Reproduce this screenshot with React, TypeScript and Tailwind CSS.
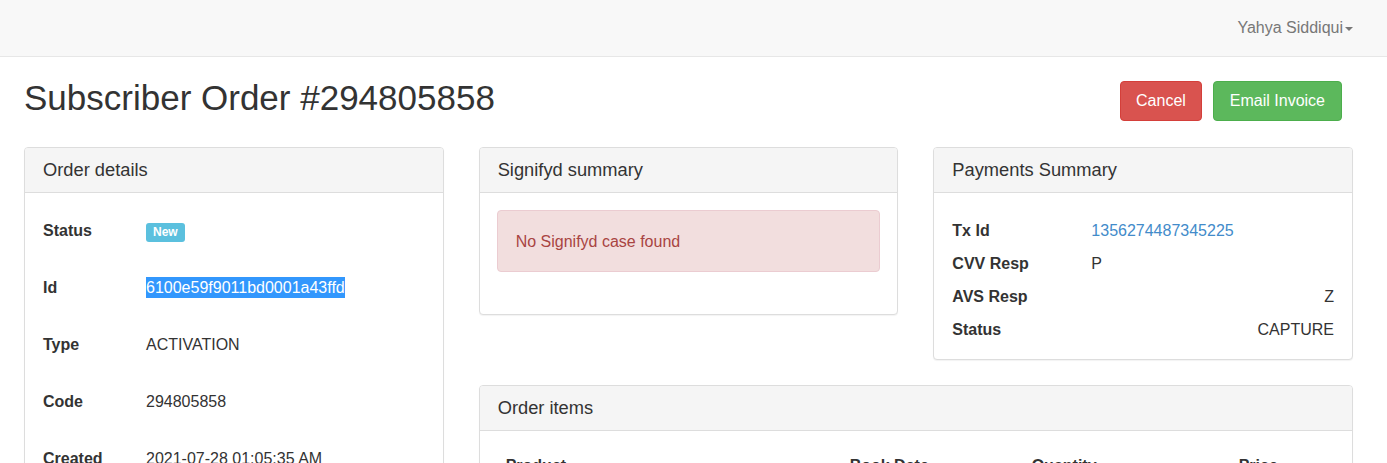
import React from "react";

const font = { fontFamily: '"Liberation Sans", Arial, sans-serif' };

function Panel({ title, children, className = "" }: { title: string; children: React.ReactNode; className?: string }) {
  return (
    <div className={`rounded-[4px] border border-[#ddd] bg-white shadow-[0_1px_1px_rgba(0,0,0,0.05)] ${className}`}>
      <div className="flex h-[45px] items-center rounded-t-[3px] border-b border-[#ddd] bg-[#f5f5f5] px-[18px] text-[18.3px] text-[#333]">
        {title}
      </div>
      {children}
    </div>
  );
}

function DetailRow({ label, children }: { label: string; children: React.ReactNode }) {
  return (
    <div className="flex h-[57px] items-center">
      <div className="w-[103px] shrink-0 font-bold text-[#333]">{label}</div>
      <div className="text-[#333]">{children}</div>
    </div>
  );
}

function PayRow({ label, children, right = false }: { label: string; children: React.ReactNode; right?: boolean }) {
  return (
    <div className="flex h-[33px] items-center">
      <div className="w-[139px] shrink-0 font-bold text-[#333]">{label}</div>
      <div className={`flex-1 text-[#333] ${right ? "text-right" : ""}`}>{children}</div>
    </div>
  );
}

export default function App() {
  return (
    <div className="min-h-screen bg-white text-[16px] text-[#333]" style={font}>
      {/* Navbar */}
      <div className="flex h-[57px] items-center justify-end border-b border-[#e7e7e7] bg-[#f8f8f8] pr-[34px]">
        <span className="flex items-center text-[16px] text-[#777]">
          Yahya Siddiqui
          <span className="ml-[2px] mt-[2px] h-0 w-0 border-x-[4px] border-t-[4px] border-x-transparent border-t-[#777]" />
        </span>
      </div>

      <div className="pl-[24px] pr-[34px] pb-[40px]">
        {/* Title row */}
        <div className="flex items-start justify-between pt-[21px]">
          <h1 className="text-[35px] leading-[40px] text-[#333]">Subscriber Order #294805858</h1>
          <div className="mt-[3px] mr-[11px] flex gap-[11px]">
            <button className="h-[40px] rounded-[4px] border border-[#d43f3a] bg-[#d9534f] px-[15px] text-[16px] text-white">
              Cancel
            </button>
            <button className="h-[40px] rounded-[4px] border border-[#4cae4c] bg-[#5cb85c] px-[16px] text-[16px] text-white">
              Email Invoice
            </button>
          </div>
        </div>

        <div className="mt-[26px] grid grid-cols-3 gap-x-[35px]">
          {/* Order details */}
          <Panel title="Order details">
            <div className="px-[18px] pt-[9px] pb-[20px]">
              <DetailRow label="Status">
                <span className="inline-block rounded-[3px] bg-[#5bc0de] px-[7px] pt-[2px] pb-[3px] text-[12px] leading-[14px] font-bold text-white">
                  New
                </span>
              </DetailRow>
              <DetailRow label="Id">
                <span className="inline-block h-[21px] bg-[#3297fd] leading-[21px] text-white">6100e59f9011bd0001a43ffd</span>
              </DetailRow>
              <DetailRow label="Type">ACTIVATION</DetailRow>
              <DetailRow label="Code">294805858</DetailRow>
              <DetailRow label="Created">2021-07-28 01:05:35 AM</DetailRow>
            </div>
          </Panel>

          <div className="col-span-2">
            <div className="grid grid-cols-2 items-start gap-x-[35px]">
              <Panel title="Signifyd summary">
                <div className="px-[17px] pt-[17px] pb-[19px]">
                  <div className="mb-[23px] rounded-[4px] border border-[#ebccd1] bg-[#f2dede] px-[18px] pt-[19px] pb-[18px] leading-[23px] text-[#a94442]">
                    No Signifyd case found
                  </div>
                </div>
              </Panel>

              <Panel title="Payments Summary">
                <div className="px-[18px] pt-[21px] pb-[13px]">
                  <PayRow label="Tx Id">
                    <span className="text-[#428bca]">1356274487345225</span>
                  </PayRow>
                  <PayRow label="CVV Resp">P</PayRow>
                  <PayRow label="AVS Resp" right>
                    Z
                  </PayRow>
                  <PayRow label="Status" right>
                    CAPTURE
                  </PayRow>
                </div>
              </Panel>
            </div>

            <Panel title="Order items" className="mt-[25px]">
              <div className="p-[17px]">
                <table className="w-full border-collapse text-left">
                  <thead>
                    <tr className="font-bold">
                      <th className="w-[344px] px-[9px] pt-[6px] pb-[9px]">Product</th>
                      <th className="w-[182px] px-[9px] pt-[6px] pb-[9px]">Book Date</th>
                      <th className="w-[207px] px-[9px] pt-[6px] pb-[9px]">Quantity</th>
                      <th className="px-[9px] pt-[6px] pb-[9px]">Price</th>
                    </tr>
                  </thead>
                </table>
              </div>
            </Panel>
          </div>
        </div>
      </div>
    </div>
  );
}
